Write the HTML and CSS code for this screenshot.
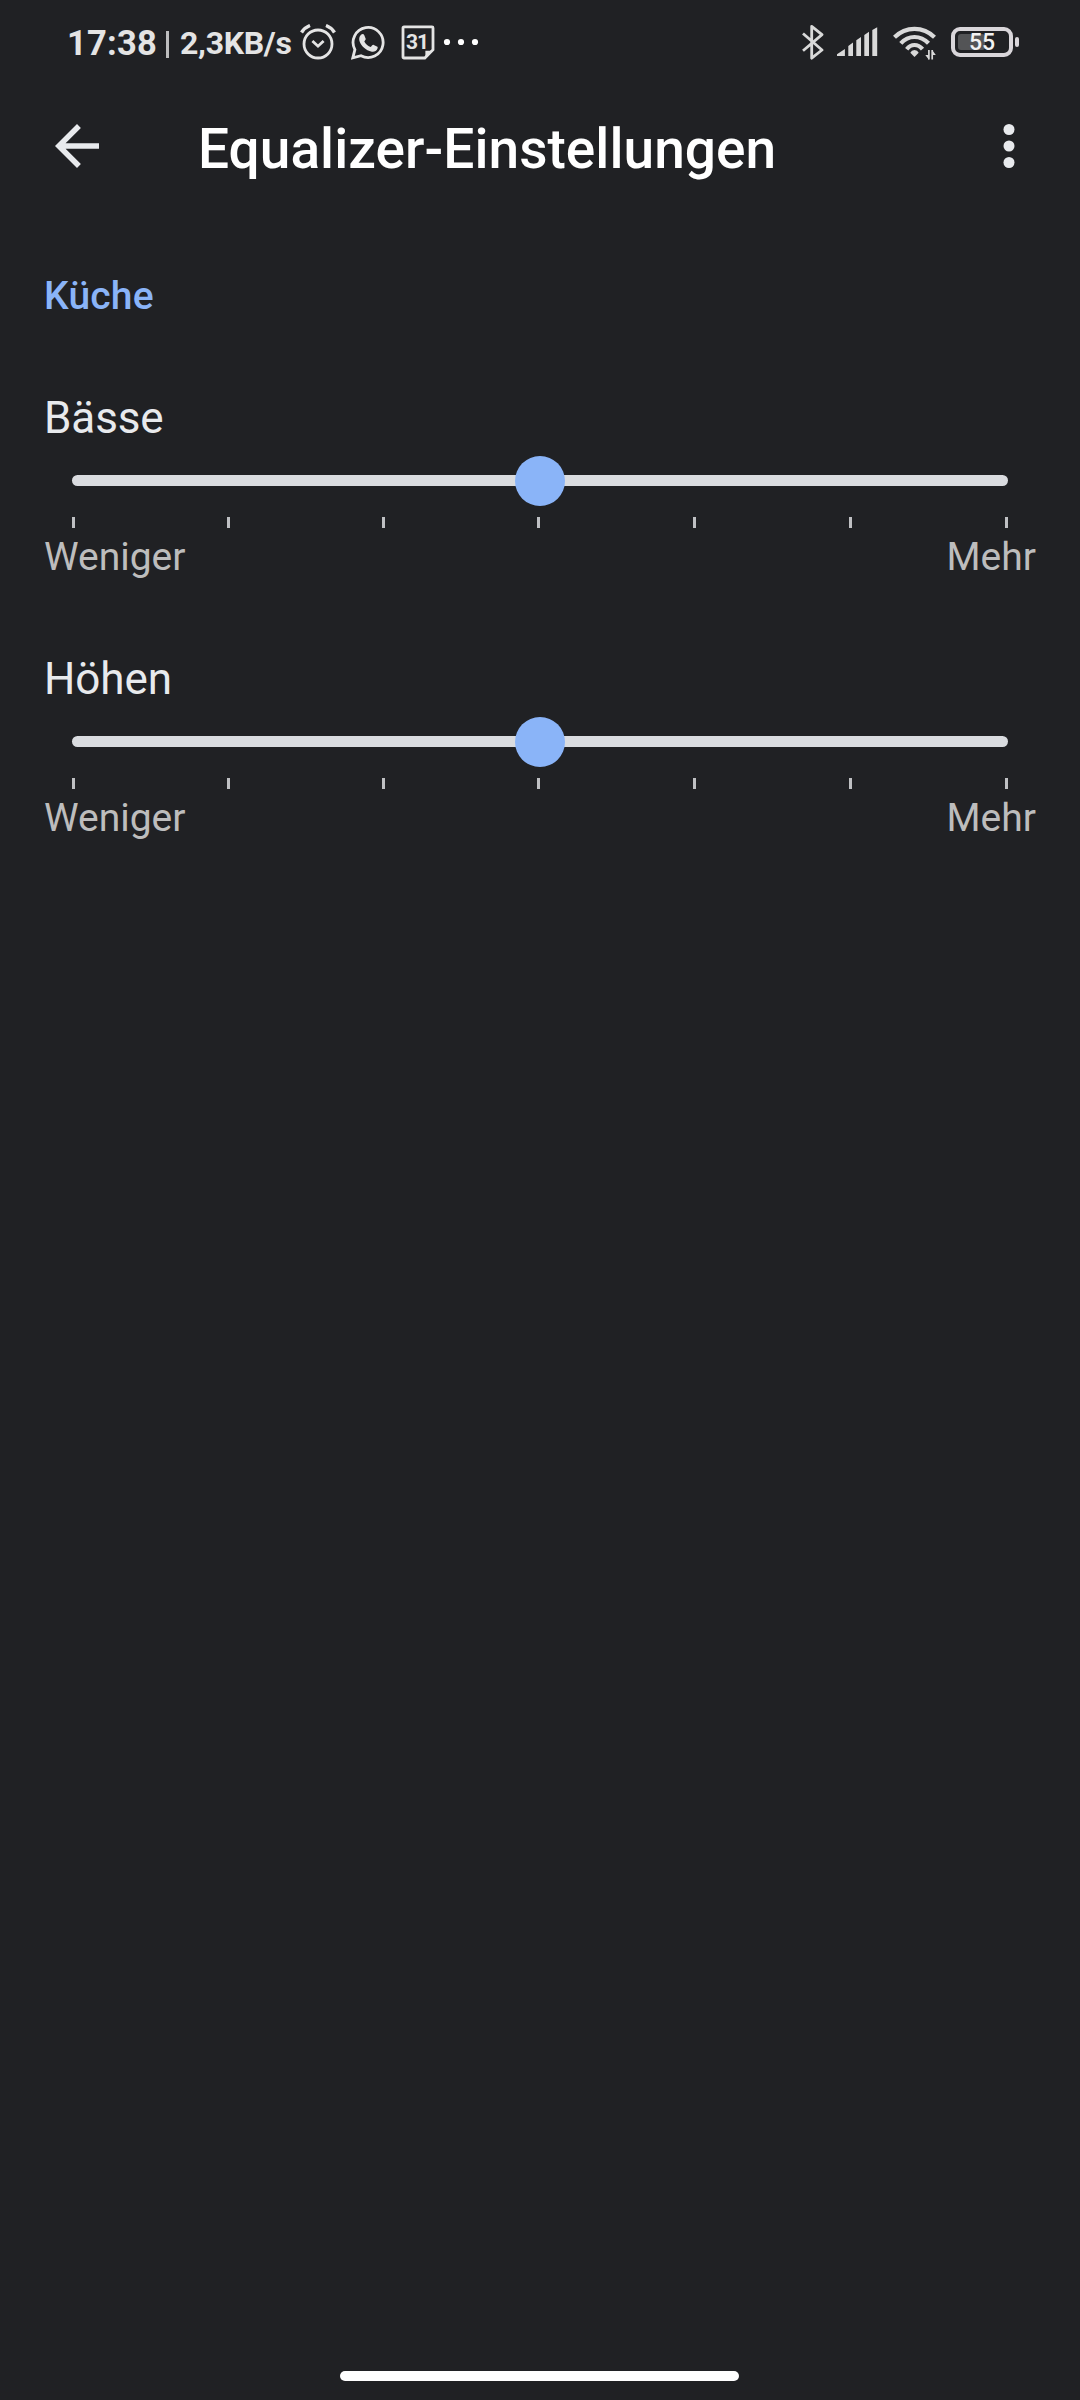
FILE: index.html
```html
<!DOCTYPE html>
<html lang="de">
<head>
    <meta charset="UTF-8">
    <meta name="viewport" content="width=device-width, initial-scale=1.0">
    <title>Equalizer-Einstellungen</title>
    <link rel="stylesheet" href="styles.css">
</head>
<body>
    <div class="screen">
        <div class="status-bar">
            <span class="time">17:38</span>
            <span class="divider"></span>
            <span class="speed">2,3KB/s</span>
            <svg class="icon-alarm" width="36" height="36" viewBox="0 0 36 36" fill="none" stroke="currentColor">
                <circle cx="18" cy="20" r="14" stroke-width="2.8"/>
                <path d="M1.5 8.5Q4.5 3.7 10 1.5M34.5 8.5Q31.5 3.7 26 1.5" stroke-width="3.4"/>
                <path d="M12.4 17l5.6 5.2 5.6-5.2" stroke-width="2.8"/>
            </svg>
            <svg class="icon-whatsapp" width="34" height="35" viewBox="0 0 34 35" fill="none" stroke="currentColor">
                <path d="M1.8 32.8l2.1-8.2A15 15 0 1 1 10 30.7z" stroke-width="2.8"/>
                <path d="M10 9.7c1.5-1 2.7-.8 3.3.6l1.3 3.2c.4 1-.2 1.7-1.3 2.9 1.6 2.9 3.7 4.7 6.5 5.7 1.6-2 2-2.6 3-2.1l3.1 1.5c1 .5.9.9.6 2.1-.9 2.8-3.7 3.5-5.7 3.1C14.5 25.4 10.5 21 8.8 17c-1.1-2.7-.7-5.6 1.2-7.3z" fill="currentColor" stroke="none"/>
            </svg>
            <div class="icon-calendar">
                <svg width="34" height="35" viewBox="0 0 34 35" fill="none" stroke="currentColor" stroke-width="2.8">
                    <path d="M3 1.9h28a1 1 0 0 1 1 1V24.7l-8.2 8.3H3a1 1 0 0 1-1-1V3a1 1 0 0 1 1-1.1z"/>
                    <path d="M24.4 32v-6.2H31z" fill="currentColor" stroke="none"/>
                </svg>
                <span class="day">31</span>
            </div>
            <svg class="icon-more" width="36" height="8" viewBox="0 0 36 8" fill="#fff">
                <circle cx="4" cy="4" r="3.1"/>
                <circle cx="18" cy="4" r="3.1"/>
                <circle cx="32" cy="4" r="3.1"/>
            </svg>

            <svg class="icon-bluetooth" width="22" height="36" viewBox="0 0 22 36" fill="none" stroke="currentColor" stroke-width="2.8" stroke-linejoin="round">
                <path d="M1 9.5l19 16.5-10.3 8.2V2.3L20 10.6 1 26.8"/>
            </svg>
            <svg class="icon-signal" width="41" height="30" viewBox="0 0 41 30" fill="currentColor">
                <path d="M0 29v-1.8L7.9 22v7zM11.3 29V18.9l4.7-3.4V29zM19.3 29V13.2l4.7-3.3V29zM27.3 29V8l4.7-3.3V29zM35.3 29V3L40.2.2V29z"/>
            </svg>
            <svg class="icon-wifi" width="44" height="34" viewBox="0 0 44 34" fill="none" stroke="currentColor" stroke-width="4.2">
                <path d="M1.5 11.2Q10 2.8 21.5 2.8T41.5 11.2M7.8 17.3Q13.5 11 21.5 11T35.5 17.3M13.7 23.2Q17 19 21.5 19T29.5 23.2"/>
                <path d="M21.5 31l-4.2-4.3Q18.5 24 21.5 24t4.2 2.7z" fill="currentColor" stroke="none"/>
                <path d="M35.9 24v9.5M39.2 24v9.5" stroke-width="1.7"/>
                <path d="M32.3 29l3.6 4.7V29zM39.2 29h3.6L39.2 24z" fill="currentColor" stroke="none"/>
            </svg>
            <div class="battery">
                <div class="level"></div>
                <span class="percent">55</span>
            </div>
            <div class="battery-tip"></div>
        </div>

        <div class="app-bar">
            <svg class="back" width="44" height="44" viewBox="0 0 44 44">
                <path d="M44 19.3H10.6L25.9 4 22 0 0 22l22 22 3.9-3.9-15.3-15.4H44z"/>
            </svg>
            <h1 class="title">Equalizer-Einstellungen</h1>
            <svg class="menu" width="12" height="44" viewBox="0 0 12 44">
                <circle cx="6" cy="5.5" r="5.5"/>
                <circle cx="6" cy="22" r="5.5"/>
                <circle cx="6" cy="38.5" r="5.5"/>
            </svg>
        </div>

        <div class="content">
            <h2 class="room">Küche</h2>

            <div class="setting">
                <div class="name">Bässe</div>
                <div class="slider">
                    <div class="thumb"></div>
                </div>
                <div class="ticks">
                    <span></span><span></span><span></span><span></span><span></span><span></span><span></span>
                </div>
                <div class="labels">
                    <span>Weniger</span>
                    <span>Mehr</span>
                </div>
            </div>

            <div class="setting">
                <div class="name">Höhen</div>
                <div class="slider">
                    <div class="thumb"></div>
                </div>
                <div class="ticks">
                    <span></span><span></span><span></span><span></span><span></span><span></span><span></span>
                </div>
                <div class="labels">
                    <span>Weniger</span>
                    <span>Mehr</span>
                </div>
            </div>
        </div>

        <div class="home-bar"></div>
    </div>
</body>
</html>
```
FILE: styles.css
```css
* {
    margin: 0;
    padding: 0;
    box-sizing: border-box;
}

body {
    background-color: #202124;
    font-family: Roboto, "Liberation Sans", sans-serif;
}

.screen {
    width: 1080px;
    height: 2400px;
    display: flex;
    flex-direction: column;
    overflow: hidden;
    background-color: #202124;
}

/* status bar */
.status-bar {
    height: 84px;
    padding: 0 61px 0 67px;
    display: flex;
    align-items: flex-start;
    color: #e4e4e4;
    white-space: nowrap;
}

.status-bar > * {
    flex-shrink: 0;
}

.time {
    width: 90px;
    margin-top: 23px;
    font-size: 34.5px;
    line-height: 40px;
    font-weight: 700;
    letter-spacing: 0.2px;
}

.divider {
    width: 3px;
    height: 27px;
    margin: 31px 0 0 9px;
    background-color: #bdbdbe;
}

.speed {
    width: 111px;
    margin: 23px 0 0 11px;
    font-size: 32px;
    line-height: 40px;
    font-weight: 700;
    letter-spacing: -0.3px;
}

.icon-alarm {
    margin: 24px 0 0 9px;
}

.icon-whatsapp {
    margin: 25px 0 0 15px;
}

.icon-calendar {
    position: relative;
    width: 34px;
    height: 35px;
    margin: 25px 0 0 16px;
}

.day {
    position: absolute;
    left: 0;
    top: 5px;
    width: 32px;
    text-align: center;
    font-size: 21px;
    line-height: 24px;
    font-weight: 700;
    letter-spacing: -1px;
}

.icon-more {
    margin: 38px 0 0 8px;
}

.icon-bluetooth {
    margin: 24px 0 0 auto;
    color: #d9d9d9;
}

.icon-signal {
    margin: 27px 0 0 13px;
    color: #d9d9d9;
}

.icon-wifi {
    margin: 26px 0 0 15px;
    color: #d9d9d9;
}

.battery {
    position: relative;
    width: 62px;
    height: 30px;
    margin: 27px 0 0 14px;
    padding: 3px;
    border: 4px solid #d9d6da;
    border-radius: 9px;
}

.level {
    width: 27px;
    height: 16px;
    border-radius: 3px;
    background-color: #535456;
}

.percent {
    position: absolute;
    left: 0;
    top: -1px;
    width: 54px;
    text-align: center;
    font-size: 23px;
    line-height: 26px;
    font-weight: 500;
    color: #f2f2f2;
}

.battery-tip {
    width: 4px;
    height: 10px;
    margin: 37px 0 0 2px;
    border-radius: 2px;
    background-color: #d9d6da;
}

/* app bar */
.app-bar {
    height: 126px;
    padding: 33px 65px 0 55px;
    display: flex;
    align-items: flex-start;
    fill: #e8eaed;
}

.back,
.menu {
    margin-top: 7px;
}

.title {
    margin-left: 99px;
    font-size: 55px;
    line-height: 64px;
    font-weight: 500;
    letter-spacing: 0.05px;
    color: #fff;
}

.menu {
    margin-left: auto;
}

/* equalizer */
.content {
    flex: 1;
    padding: 63px 44px 0;
}

.room {
    margin-bottom: 73px;
    font-size: 39px;
    line-height: 46px;
    font-weight: 500;
    letter-spacing: 0.2px;
    color: #8ab4f8;
}

.setting {
    margin-bottom: 73px;
}

.name {
    font-size: 44px;
    line-height: 52px;
    letter-spacing: -0.1px;
    color: #e8eaed;
}

.slider {
    height: 11px;
    margin: 31px 28px 0;
    display: flex;
    align-items: center;
    justify-content: center;
    border-radius: 6px;
    background-color: #dadce0;
}

.thumb {
    width: 50px;
    height: 50px;
    flex-shrink: 0;
    border-radius: 50%;
    background-color: #8ab4f8;
}

.ticks {
    margin: 31px 28px 6px;
    display: grid;
    grid-template-columns: repeat(3, 155px) repeat(3, 156px) 3px;
}

.ticks span {
    width: 3px;
    height: 11px;
    background-color: #bfc0c3;
}

.labels {
    display: flex;
    justify-content: space-between;
    font-size: 39px;
    line-height: 46px;
    color: #bdbdbd;
}

.home-bar {
    width: 399px;
    height: 10px;
    margin: 0 0 19px 340px;
    border-radius: 5px;
    background-color: #fff;
}
```
